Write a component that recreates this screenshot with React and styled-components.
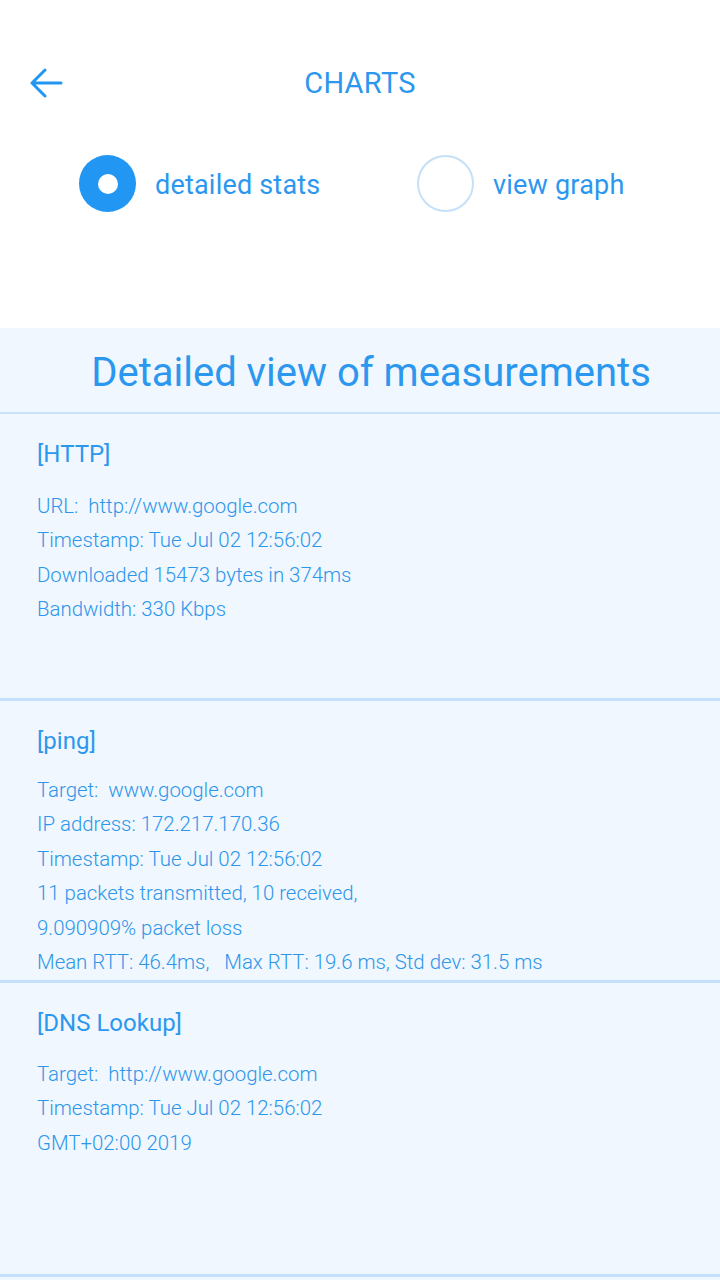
import React from "react";
import styled, { createGlobalStyle } from "styled-components";

const GlobalStyle = createGlobalStyle`
  html, body {
    margin: 0;
    padding: 0;
    background: #f0f7fe;
  }
  body {
    font-family: Roboto, "Liberation Sans", sans-serif;
  }
`;

const Page = styled.div`
  width: 720px;
  min-height: 1280px;
  background: #f0f7fe;
`;

const Header = styled.div`
  background: #ffffff;
  height: 328px;
  display: flex;
  flex-direction: column;
`;

const TopBar = styled.div`
  height: 66px;
  margin-top: 50px;
  display: flex;
  align-items: center;
  position: relative;
  justify-content: center;
`;

const BackButton = styled.button`
  position: absolute;
  left: 26px;
  top: 15px;
  width: 40px;
  height: 36px;
  padding: 0;
  border: none;
  background: none;
  display: flex;
  align-items: center;
  justify-content: center;
`;

const Title = styled.div`
  font-size: 29px;
  color: #2c97ee;
  letter-spacing: 0.3px;
`;

const RadioRow = styled.div`
  display: flex;
  margin-top: 39px;
  padding-left: 79px;
`;

const RadioOption = styled.label`
  display: flex;
  flex-shrink: 0;
  align-items: center;
  width: 338px;
  gap: 19px;
`;

const RadioCircle = styled.span`
  width: 57px;
  height: 57px;
  flex-shrink: 0;
  box-sizing: border-box;
  border-radius: 50%;
  display: flex;
  align-items: center;
  justify-content: center;
  background: ${(p) => (p.checked ? "#2196f3" : "#ffffff")};
  border: ${(p) => (p.checked ? "none" : "2px solid #c6e0f7")};

  &::after {
    content: "";
    display: ${(p) => (p.checked ? "block" : "none")};
    width: 20px;
    height: 20px;
    border-radius: 50%;
    background: #ffffff;
  }
`;

const RadioLabel = styled.span`
  font-size: 27px;
  color: #2c97ee;
  padding-top: 3px;
  letter-spacing: 0.2px;
`;

const Banner = styled.div`
  height: 86px;
  border-bottom: 2px solid #c9e2f8;
  display: flex;
  align-items: center;
  justify-content: center;
  font-size: 40px;
  color: #2c97ee;
  padding-top: 5px;
  padding-left: 22px;
  box-sizing: border-box;
`;

const Section = styled.div`
  min-height: ${(p) => p.minHeight}px;
  box-sizing: border-box;
  padding: 23px 37px 0;
  border-bottom: 3px solid #c4e0fa;
`;

const SectionTitle = styled.div`
  font-size: 24px;
  line-height: 34px;
  color: #2c97ee;
  margin-bottom: ${(p) => p.gap}px;
`;

const Line = styled.div`
  font-size: 20.4px;
  font-weight: 300;
  line-height: 34.4px;
  color: #2c96ea;
  white-space: pre;
`;

const sections = [
  {
    title: "[HTTP]",
    minHeight: 287,
    gap: 18,
    lines: [
      "URL:  http://www.google.com",
      "Timestamp: Tue Jul 02 12:56:02",
      "Downloaded 15473 bytes in 374ms",
      "Bandwidth: 330 Kbps",
    ],
  },
  {
    title: "[ping]",
    minHeight: 282,
    gap: 15,
    lines: [
      "Target:  www.google.com",
      "IP address: 172.217.170.36",
      "Timestamp: Tue Jul 02 12:56:02",
      "11 packets transmitted, 10 received,",
      "9.090909% packet loss",
      "Mean RTT: 46.4ms,   Max RTT: 19.6 ms, Std dev: 31.5 ms",
    ],
  },
  {
    title: "[DNS Lookup]",
    minHeight: 294,
    gap: 17,
    lines: [
      "Target:  http://www.google.com",
      "Timestamp: Tue Jul 02 12:56:02",
      "GMT+02:00 2019",
    ],
  },
];

const App = () => {
  return (
    <Page>
      <GlobalStyle />
      <Header>
        <TopBar>
          <BackButton aria-label="back">
            <svg width="34" height="30" viewBox="0 0 34 30" fill="none">
              <path
                d="M32 15H4M16 2L3 15l13 13"
                stroke="#2196f3"
                strokeWidth="3"
                strokeLinecap="round"
                strokeLinejoin="round"
              />
            </svg>
          </BackButton>
          <Title>CHARTS</Title>
        </TopBar>
        <RadioRow>
          <RadioOption>
            <RadioCircle checked />
            <RadioLabel>detailed stats</RadioLabel>
          </RadioOption>
          <RadioOption>
            <RadioCircle />
            <RadioLabel>view graph</RadioLabel>
          </RadioOption>
        </RadioRow>
      </Header>
      <Banner>Detailed view of measurements</Banner>
      {sections.map((s) => (
        <Section key={s.title} minHeight={s.minHeight}>
          <SectionTitle gap={s.gap}>{s.title}</SectionTitle>
          {s.lines.map((l) => (
            <Line key={l}>{l}</Line>
          ))}
        </Section>
      ))}
    </Page>
  );
};

export default App;
